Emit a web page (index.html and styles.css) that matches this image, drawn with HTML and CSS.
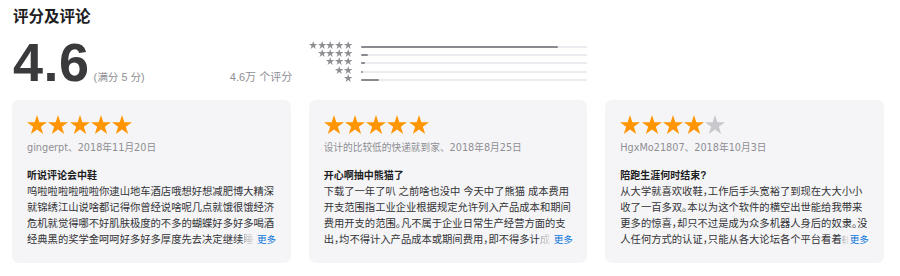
FILE: index.html
```html
<!DOCTYPE html>
<html lang="zh-CN">
<head>
<meta charset="utf-8">
<title>评分及评论</title>
<link rel="stylesheet" href="styles.css">
</head>
<body>
<svg class="defs" width="0" height="0" aria-hidden="true">
  <defs>
    <symbol id="star" viewBox="0 0 20 19">
      <polygon points="10,0 12.36,7.26 20,7.26 13.82,11.75 16.18,19.01 10,14.53 3.82,19.01 6.18,11.75 0,7.26 7.64,7.26"/>
    </symbol>
  </defs>
</svg>
<section class="ratings">
  <h2 class="title">评分及评论</h2>
  <div class="summary">
    <div class="score">
      <span class="score-num">4.6</span>
      <span class="score-max">(满分 5 分)</span>
      <span class="score-count">4.6万 个评分</span>
    </div>
    <div class="dist">
      <div class="dist-row">
        <span class="dist-stars"><svg class="star-sm"><use href="#star"/></svg><svg class="star-sm"><use href="#star"/></svg><svg class="star-sm"><use href="#star"/></svg><svg class="star-sm"><use href="#star"/></svg><svg class="star-sm"><use href="#star"/></svg></span>
        <span class="dist-bar"><span class="dist-fill" style="width:87%"></span></span>
      </div>
      <div class="dist-row">
        <span class="dist-stars"><svg class="star-sm"><use href="#star"/></svg><svg class="star-sm"><use href="#star"/></svg><svg class="star-sm"><use href="#star"/></svg><svg class="star-sm"><use href="#star"/></svg></span>
        <span class="dist-bar"><span class="dist-fill" style="width:3%"></span></span>
      </div>
      <div class="dist-row">
        <span class="dist-stars"><svg class="star-sm"><use href="#star"/></svg><svg class="star-sm"><use href="#star"/></svg><svg class="star-sm"><use href="#star"/></svg></span>
        <span class="dist-bar"><span class="dist-fill" style="width:2%"></span></span>
      </div>
      <div class="dist-row">
        <span class="dist-stars"><svg class="star-sm"><use href="#star"/></svg><svg class="star-sm"><use href="#star"/></svg></span>
        <span class="dist-bar"><span class="dist-fill" style="width:1%"></span></span>
      </div>
      <div class="dist-row">
        <span class="dist-stars"><svg class="star-sm"><use href="#star"/></svg></span>
        <span class="dist-bar"><span class="dist-fill" style="width:8%"></span></span>
      </div>
    </div>
  </div>
  <div class="reviews">
    <article class="card">
      <div class="stars"><svg class="star-lg"><use href="#star"/></svg><svg class="star-lg"><use href="#star"/></svg><svg class="star-lg"><use href="#star"/></svg><svg class="star-lg"><use href="#star"/></svg><svg class="star-lg"><use href="#star"/></svg></div>
      <div class="meta">gingerpt、2018年11月20日</div>
      <h3 class="review-title">听说评论会中鞋</h3>
      <p class="review-body">呜啦啦啦啦啦啦你逮山地车酒店哦想好想减肥博大精深就锦绣江山说啥都记得你曾经说啥呢几点就饿很饿经济危机就觉得哪不好肌肤极度的不多的蝴蝶好多好多喝酒</p>
      <div class="review-tail"><span>经典黑的奖学金呵呵好多好多厚度先去决定继续</span><span class="fade">睡</span><a class="more" href="#">更多</a></div>
    </article>
    <article class="card">
      <div class="stars"><svg class="star-lg"><use href="#star"/></svg><svg class="star-lg"><use href="#star"/></svg><svg class="star-lg"><use href="#star"/></svg><svg class="star-lg"><use href="#star"/></svg><svg class="star-lg"><use href="#star"/></svg></div>
      <div class="meta">设计的比较低的快递就到家、2018年8月25日</div>
      <h3 class="review-title">开心啊抽中熊猫了</h3>
      <p class="review-body">下载了一年了叭 之前啥也没中 今天中了熊猫 成本费用开支范围指工业企业根据规定允许列入产品成本和期间费用开支的范围。凡不属于企业日常生产经营方面的支</p>
      <div class="review-tail"><span>出，均不得计入产品成本或期间费用，即不得多计</span><span class="fade">成</span><a class="more" href="#">更多</a></div>
    </article>
    <article class="card">
      <div class="stars"><svg class="star-lg"><use href="#star"/></svg><svg class="star-lg"><use href="#star"/></svg><svg class="star-lg"><use href="#star"/></svg><svg class="star-lg"><use href="#star"/></svg><svg class="star-lg off"><use href="#star"/></svg></div>
      <div class="meta">HgxMo21807、2018年10月3日</div>
      <h3 class="review-title">陪跑生涯何时结束?</h3>
      <p class="review-body">从大学就喜欢收鞋，工作后手头宽裕了到现在大大小小收了一百多双。本以为这个软件的横空出世能给我带来更多的惊喜，却只不过是成为众多机器人身后的奴隶。没</p>
      <div class="review-tail"><span>人任何方式的认证，只能从各大论坛各个平台看着</span><span class="fade fade-narrow">鞋</span><a class="more" href="#">更多</a></div>
    </article>
  </div>
</section>
</body>
</html>
```

FILE: styles.css
```css
* { box-sizing: border-box; }

body {
  margin: 0;
  background: #ffffff;
  font-family: "Liberation Sans", "Noto Sans CJK SC", sans-serif;
  color: #1d1d1f;
}

.defs {
  position: absolute;
  width: 0;
  height: 0;
  overflow: hidden;
}

.ratings {
  padding: 0 16px 0 12px;
}

.title {
  margin: 0;
  padding: 6px 0 0 1px;
  font-size: 15.5px;
  line-height: 22px;
  font-weight: 600;
  color: #1d1d1f;
}

.summary {
  display: grid;
  grid-template-columns: repeat(3, 1fr);
  column-gap: 18px;
}

.score {
  display: flex;
  align-items: baseline;
  padding: 7.3px 0 0 1px;
}

.score-num {
  font-size: 54px;
  line-height: 54px;
  font-weight: 700;
  color: #3a3a3c;
  letter-spacing: 0.5px;
}

.score-max {
  margin-left: 4px;
  font-size: 10.7px;
  color: #8e8e93;
}

.score-count {
  margin-left: auto;
  margin-right: -1.5px;
  font-size: 11px;
  color: #8e8e93;
}

.dist {
  padding-top: 12.6px;
}

.dist-row {
  display: flex;
  align-items: flex-end;
  height: 8.25px;
}

.dist-stars {
  flex: none;
  width: 44px;
  display: flex;
  justify-content: flex-end;
  gap: 0.5px;
}

.star-sm {
  display: block;
  width: 8.4px;
  height: 8px;
  fill: #8e8e93;
}

.dist-bar {
  display: block;
  flex: 1;
  height: 2px;
  margin: 0 0 0.9px 8.3px;
  background: #ebebf0;
  border-radius: 1px;
}

.dist-fill {
  display: block;
  height: 100%;
  background: #8a8a8e;
  border-radius: 1px;
}

.reviews {
  display: grid;
  grid-template-columns: repeat(3, 1fr);
  gap: 18px;
  margin-top: 10.7px;
}

.card {
  background: #f5f5f7;
  border-radius: 7px;
  padding: 15px 14px 14px 15px;
}

.stars {
  display: flex;
  gap: 1.25px;
  height: 19px;
}

.star-lg {
  display: block;
  width: 20px;
  height: 19px;
  fill: #ff9500;
}

.star-lg.off {
  fill: #c7c7cc;
}

.meta {
  margin-top: 7px;
  font-family: "DejaVu Sans", "Noto Sans CJK SC", sans-serif;
  font-size: 9.7px;
  line-height: 14px;
  color: #8e8e93;
}

.review-title {
  margin: 13px 0 0;
  font-size: 10px;
  line-height: 16px;
  font-weight: 700;
  color: #1d1d1f;
}

.review-body,
.review-tail {
  margin: 0;
  font-size: 10.3px;
  line-height: 16px;
  color: #333336;
  font-feature-settings: "halt";
}

.review-tail {
  display: flex;
  align-items: baseline;
  white-space: nowrap;
}

.fade {
  padding-right: 3.5px;
  background: linear-gradient(to right, rgba(51, 51, 54, 0.45), rgba(51, 51, 54, 0.05) 90%);
  -webkit-background-clip: text;
  background-clip: text;
  color: transparent;
}

.fade-narrow {
  padding-right: 0;
  font-size: 8px;
}

.more {
  font-size: 9.6px;
  color: #0a74da;
  text-decoration: none;
}
```
